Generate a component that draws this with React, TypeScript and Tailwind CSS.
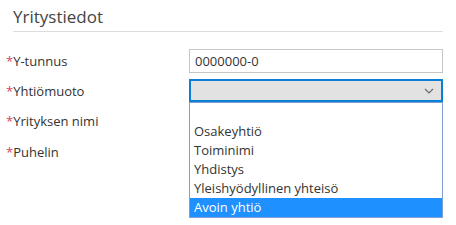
import { useState } from "react";

const options = ["", "Osakeyhtiö", "Toiminimi", "Yhdistys", "Yleishyödyllinen yhteisö", "Avoin yhtiö"];

function Label({ text }: { text: string }) {
  return (
    <div className="flex-1 pt-[2px] text-[13px] text-[#333]">
      <span className="text-[#d6455e]">*</span>
      {text}
    </div>
  );
}

export default function App() {
  const [selected] = useState(5);

  return (
    <div className="w-[456px] h-[225px] bg-white font-['Open_Sans',sans-serif] overflow-hidden">
      <h2 className="mx-[13px] pt-[5px] pb-[2px] text-[17px] leading-[24px] text-[#444] border-b border-[#dcdcdc]">
        Yritystiedot
      </h2>

      <div className="pl-[6px] pr-[13px] pt-[17px] flex flex-col gap-[6px]">
        {/* Y-tunnus */}
        <div className="flex items-center h-[24px]">
          <Label text="Y-tunnus" />
          <div className="w-[254px] h-[24px] border border-[#c6c6c6] pl-[5px] text-[13px] leading-[22px] text-[#333]">
            0000000-0
          </div>
        </div>

        {/* Yhtiömuoto */}
        <div className="flex items-center h-[24px]">
          <Label text="Yhtiömuoto" />
          <div className="relative w-[254px] h-[24px]">
            <div className="h-[23px] border-2 border-[#0a7fd6] bg-[#e2e2e2] flex items-center justify-end pr-[7px]">
              <svg width="10" height="6" viewBox="0 0 10 6">
                <polyline points="1,1 5,5 9,1" fill="none" stroke="#6b6b6b" strokeWidth="1.2" />
              </svg>
            </div>
            <div className="absolute left-0 top-[23px] w-full border border-[#7f9dd0] bg-white z-10">
              {options.map((o, i) => (
                <div
                  key={i}
                  className={`h-[19px] pl-[4px] text-[13px] leading-[19px] ${
                    i === selected ? "bg-[#1e90ff] text-white" : "text-[#333]"
                  }`}
                >
                  {o}
                </div>
              ))}
            </div>
          </div>
        </div>

        <div className="flex items-center h-[24px]">
          <Label text="Yrityksen nimi" />
          <div className="w-[254px]" />
        </div>

        <div className="flex items-center h-[25px]">
          <Label text="Puhelin" />
          <div className="w-[254px]" />
        </div>
      </div>
    </div>
  );
}
